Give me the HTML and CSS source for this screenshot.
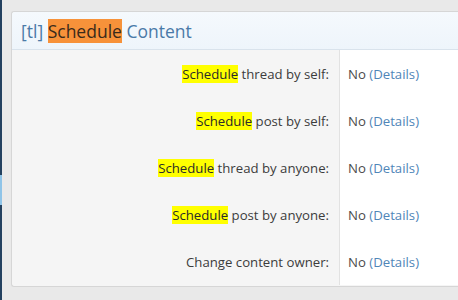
FILE: index.html
```html
<!DOCTYPE html>
<html>
<head>
<meta charset="utf-8">
<link rel="stylesheet" href="styles.css">
</head>
<body>
<div class="page">
  <div class="edge"><div class="edge-mark"></div></div>
  <div class="panel">
    <div class="head"><span class="tag">[tl]</span> <span class="hl-orange">Schedule</span> Content</div>
    <div class="rows">
      <div class="row"><div class="label"><span class="hl">Schedule</span> thread by self:</div><div class="value">No <a class="link">(Details)</a></div></div>
      <div class="row"><div class="label"><span class="hl">Schedule</span> post by self:</div><div class="value">No <a class="link">(Details)</a></div></div>
      <div class="row"><div class="label"><span class="hl">Schedule</span> thread by anyone:</div><div class="value">No <a class="link">(Details)</a></div></div>
      <div class="row"><div class="label"><span class="hl">Schedule</span> post by anyone:</div><div class="value">No <a class="link">(Details)</a></div></div>
      <div class="row"><div class="label">Change content owner:</div><div class="value">No <a class="link">(Details)</a></div></div>
    </div>
  </div>
</div>
</body>
</html>
```
FILE: styles.css
```css
html, body { margin: 0; padding: 0; }
body {
  width: 458px; height: 300px; overflow: hidden;
  background: #e9e9e9;
  font-family: "Open Sans", "Noto Sans", sans-serif;
}
.page { display: flex; height: 300px; }
.edge {
  width: 2px; flex: none; background: #23415f;
  display: flex; flex-direction: column; padding-top: 175px;
}
.edge-mark { height: 30px; background: #8fc4e8; }
.panel {
  margin: 11px 0 0 9px;
  width: 460px;
  height: 274px;
  border: 1px solid #d6d6d6;
  border-right: none;
  border-radius: 3px 0 0 3px;
  background: #f5f5f5;
  display: flex; flex-direction: column;
  align-self: flex-start;
}
.head {
  height: 38px;
  box-sizing: border-box;
  padding: 8px 0 0 9px;
  background: linear-gradient(#f5f9fd, #eef5fb);
  border-bottom: 1px solid #d9e3ec;
  color: #4a7aa8;
  font-size: 17.5px;
  line-height: 22px;
  border-radius: 3px 0 0 0;
}
.hl-orange { background: #f7923a; color: #3a2a1a; }
.rows { display: flex; flex-direction: column; }
.row { display: flex; height: 47px; }
.label {
  width: 327px; flex: none;
  box-sizing: border-box;
  padding-right: 10px;
  text-align: right;
  display: flex; align-items: center; justify-content: flex-end;
  color: #3c3c3c;
  font-size: 13.2px;
  white-space: pre;
}
.value {
  flex: 1;
  background: #ffffff;
  border-left: 1px solid #e2e2e2;
  display: flex; align-items: center;
  padding-left: 8px;
  color: #4a4a4a;
  font-size: 13.2px;
  white-space: pre;
}
.hl { background: #ffff00; color: #2a2a2a; }
.link { color: #4f86b8; }
```
